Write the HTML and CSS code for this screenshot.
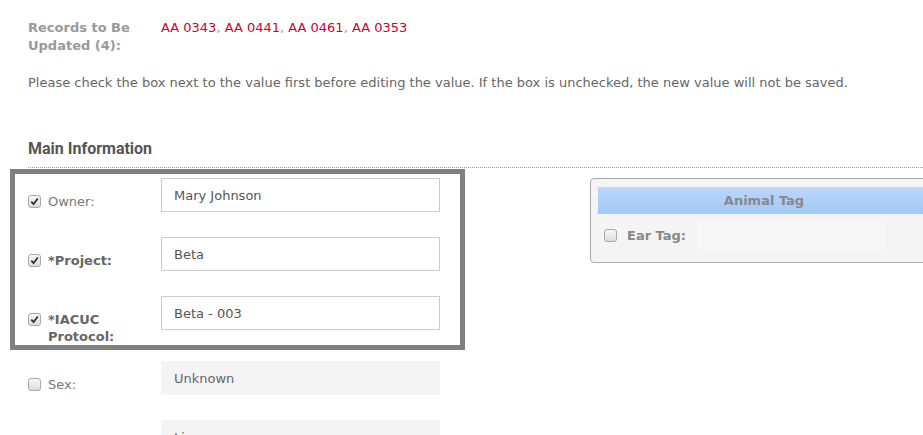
FILE: index.html
```html
<!DOCTYPE html>
<html lang="en">

<head>
    <meta charset="UTF-8">
    <meta name="viewport" content="width=device-width, initial-scale=1.0">
    <title>Batch Update Animals</title>
    <link rel="stylesheet" href="styles.css">
</head>

<body>
    <div class="records">
        <div class="records-label">Records to Be Updated (4):</div>
        <div class="records-list">
            <span class="rec">AA 0343</span>, <span class="rec">AA 0441</span>, <span class="rec">AA 0461</span>, <span class="rec">AA 0353</span>
        </div>
    </div>

    <p class="notice">Please check the box next to the value first before editing the value. If the box is unchecked, the new value will not be saved.</p>

    <h2 class="section-title">Main Information</h2>

    <div class="main">
        <div class="left-col">
            <div class="highlight">
                <div class="field">
                    <label class="field-label">
                        <span class="check on"><svg viewBox="0 0 12 12"><path d="M2.5 6.2 L5 8.8 L9.6 2.8" /></svg></span>
                        <span>Owner:</span>
                    </label>
                    <input class="field-input" type="text" value="Mary Johnson">
                </div>
                <div class="field">
                    <label class="field-label strong">
                        <span class="check on"><svg viewBox="0 0 12 12"><path d="M2.5 6.2 L5 8.8 L9.6 2.8" /></svg></span>
                        <span>*Project:</span>
                    </label>
                    <input class="field-input" type="text" value="Beta">
                </div>
                <div class="field">
                    <label class="field-label strong">
                        <span class="check on"><svg viewBox="0 0 12 12"><path d="M2.5 6.2 L5 8.8 L9.6 2.8" /></svg></span>
                        <span>*IACUC<br>Protocol:</span>
                    </label>
                    <input class="field-input" type="text" value="Beta - 003">
                </div>
            </div>

            <div class="field">
                <label class="field-label">
                    <span class="check"></span>
                    <span>Sex:</span>
                </label>
                <input class="field-input off" type="text" value="Unknown" disabled>
            </div>
            <div class="field">
                <label class="field-label">
                    <span class="check"></span>
                    <span>Status:</span>
                </label>
                <input class="field-input off" type="text" value="Live" disabled>
            </div>
        </div>

        <div class="panel">
            <div class="panel-head">Animal Tag</div>
            <div class="panel-row">
                <span class="check"></span>
                <span class="panel-label">Ear Tag:</span>
                <input class="panel-input" type="text" disabled>
            </div>
        </div>
    </div>
</body>

</html>
```

FILE: styles.css
```css
body {
    margin: 0;
    padding: 0 28px;
    font-family: 'DejaVu Sans', Verdana, sans-serif;
    font-size: 13px;
    color: #666;
    background: #fff;
    overflow: hidden;
    height: 435px;
}

/* top summary */
.records {
    display: flex;
    padding-top: 19px;
    line-height: 18px;
}

.records-label {
    width: 133px;
    font-weight: bold;
    color: #999;
}

.records-list {
    color: #999;
}

.rec {
    color: #cc0033;
}

.notice {
    margin: 19px 0 0;
    line-height: 18px;
    color: #666;
}

.section-title {
    margin: 47px -28px 0 0;
    padding-bottom: 8px;
    font-family: Roboto, 'Liberation Sans', sans-serif;
    font-size: 16px;
    line-height: 20px;
    font-weight: 700;
    color: #555;
    border-bottom: 1px dotted #999;
}

.main {
    display: flex;
    align-items: flex-start;
}

.left-col {
    width: 437px;
    flex-shrink: 0;
    display: flex;
    flex-direction: column;
    gap: 25px;
}

/* grey frame round the checked fields */
.highlight {
    margin: 1px 0 -14px -18px;
    padding: 4px 20px 0 13px;
    border: 5px solid #808080;
    display: flex;
    flex-direction: column;
    gap: 25px;
}

.field {
    display: flex;
    align-items: flex-start;
}

.field-label {
    width: 133px;
    display: flex;
    align-items: flex-start;
    gap: 7px;
    padding-top: 15px;
    line-height: 17px;
    color: #777;
}

.field-label.strong {
    font-weight: bold;
    color: #666;
}

.check {
    width: 11px;
    height: 11px;
    margin-top: 2px;
    flex-shrink: 0;
    border: 1px solid #a8a8a8;
    border-radius: 3px;
    background: linear-gradient(#f8f8f8, #dcdcdc);
}

.check svg {
    display: block;
    width: 11px;
    height: 11px;
}

.check svg path {
    fill: none;
    stroke: #333;
    stroke-width: 2;
}

.field-input {
    width: 279px;
    height: 34px;
    box-sizing: border-box;
    padding: 0 12px;
    border: 1px solid #ccc;
    font-family: 'DejaVu Sans', Verdana, sans-serif;
    font-size: 13px;
    color: #555;
    background: #fff;
}

.field-input.off {
    border-color: #f4f4f4;
    background: #f4f4f4;
    color: #666;
}

/* right side tag panel */
.panel {
    margin: 10px 0 0 125px;
    width: 348px;
    flex-shrink: 0;
    box-sizing: border-box;
    padding: 8px 7px 12px;
    border: 1px solid #aaa;
    border-radius: 4px;
    background: #f4f4f4;
}

.panel-head {
    height: 27px;
    line-height: 27px;
    text-align: center;
    font-weight: bold;
    color: #888;
    background: linear-gradient(#bcd8fc, #9fc7f8);
}

.panel-row {
    display: flex;
    align-items: center;
    margin-top: 6px;
    padding-left: 6px;
}

.panel-row .check {
    margin-top: 0;
}

.panel-label {
    margin-left: 10px;
    width: 70px;
    font-weight: bold;
    color: #888;
}

.panel-input {
    width: 188px;
    height: 30px;
    box-sizing: border-box;
    border: none;
    background: #f7f7f7;
}
```
